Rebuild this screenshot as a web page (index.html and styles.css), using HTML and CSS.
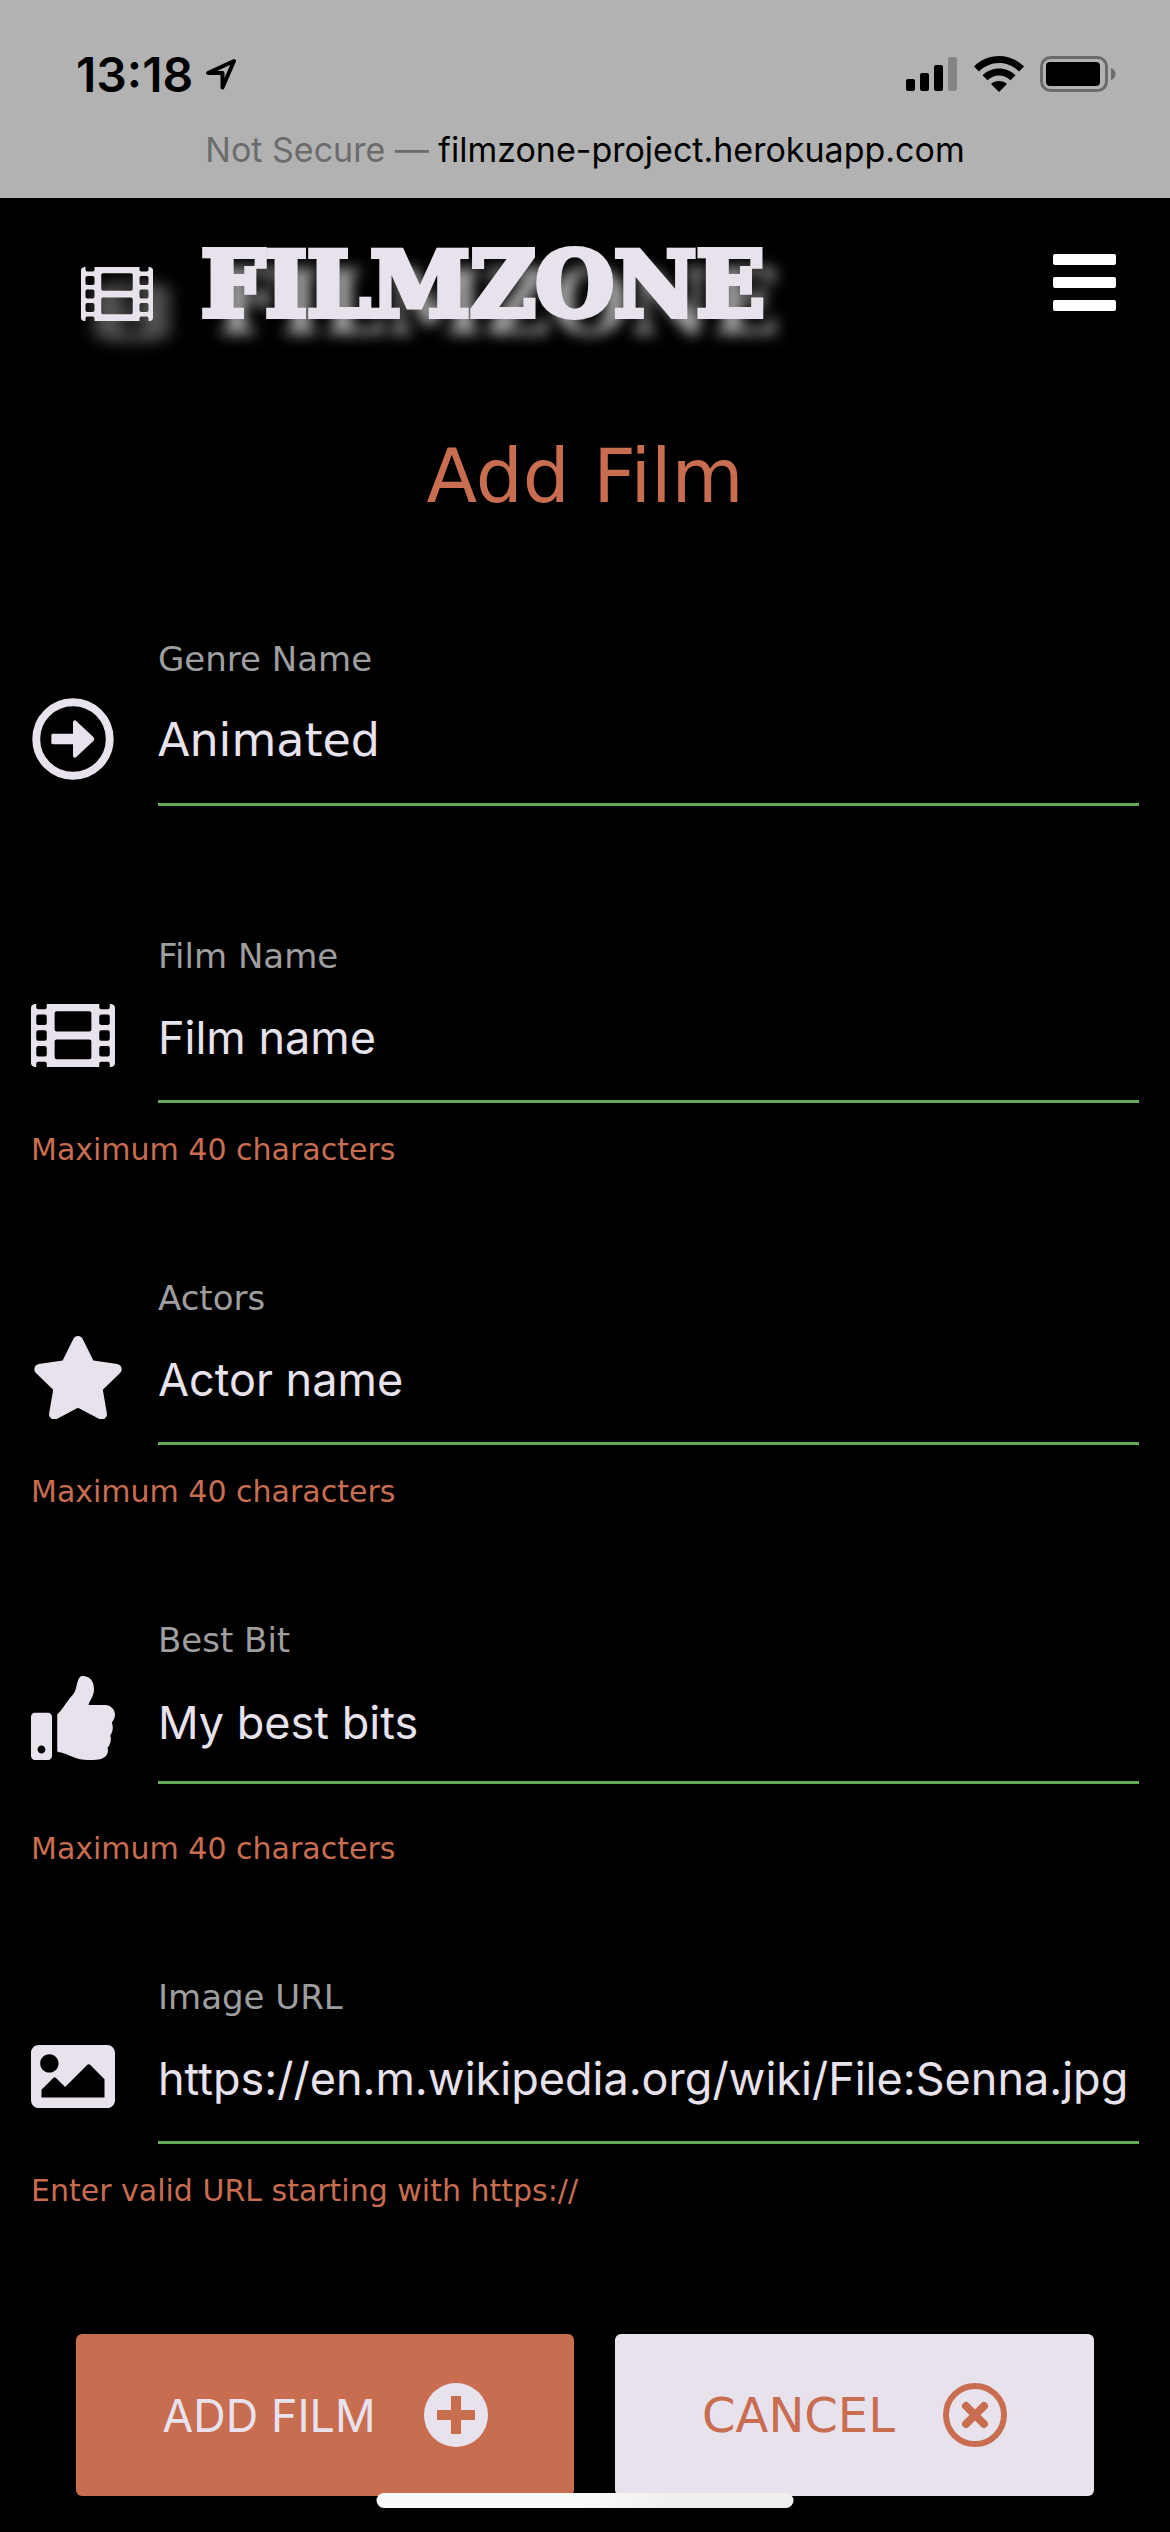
FILE: index.html
```html
<!DOCTYPE html>
<html lang="en">
<head>
<meta charset="utf-8">
<meta name="viewport" content="width=device-width, initial-scale=1">
<title>FilmZone - Add Film</title>
<link rel="stylesheet" href="styles.css">
</head>
<body>
<svg class="sprite" aria-hidden="true">
  <symbol id="film" viewBox="0 0 512 384"><path fill-rule="evenodd" d="M0 24Q0 4 24 0h8v20q0 12 12 12h40q12 0 12-12V0h320v20q0 12 12 12h40q12 0 12-12V0h8q24 4 24 24v336q0 20-24 24h-8v-20q0-12-12-12h-40q-12 0-12 12v20H96v-20q0-12-12-12H44q-12 0-12 12v20h-8q-24-4-24-24zM44 64q-12 0-12 12v40q0 12 12 12h40q12 0 12-12V76q0-12-12-12zm0 96q-12 0-12 12v40q0 12 12 12h40q12 0 12-12v-40q0-12-12-12zm0 96q-12 0-12 12v40q0 12 12 12h40q12 0 12-12v-40q0-12-12-12zM428 64q-12 0-12 12v40q0 12 12 12h40q12 0 12-12V76q0-12-12-12zm0 96q-12 0-12 12v40q0 12 12 12h40q12 0 12-12v-40q0-12-12-12zm0 96q-12 0-12 12v40q0 12 12 12h40q12 0 12-12v-40q0-12-12-12zM156 44q-12 0-12 12v100q0 12 12 12h200q12 0 12-12V56q0-12-12-12zm0 172q-12 0-12 12v96q0 12 12 12h200q12 0 12-12v-96q0-12-12-12z"/></symbol>
</svg>

<div class="status">
  <div class="status-row">
    <span class="clock">13:18
      <svg class="location" viewBox="0 0 32 32" aria-hidden="true"><path d="M29 3 3 15h14.500v14.500z" fill="none" stroke="currentColor" stroke-width="4" stroke-linejoin="round"/></svg>
    </span>
    <span class="indicators">
      <svg width="52" height="36" viewBox="0 0 52 36" aria-hidden="true"><rect y="23" width="9" height="12" rx="2"/><rect x="14" y="17" width="9" height="18" rx="2"/><rect x="28" y="9" width="9" height="26" rx="2"/><rect x="42" y="1" width="9" height="34" rx="2" opacity=".25"/></svg>
      <svg width="50" height="36" viewBox="0 0 50 36" aria-hidden="true"><path d="M25 0C15.500 0 6.500 3.800 0 10.500l5 5C10.500 10 17.500 7 25 7s14.500 3 20 8.500l5-5C43.500 3.800 34.500 0 25 0z"/><path d="M25 12.500c-6 0-12 2.400-16.500 6.700l5 5C16.800 21.200 20.800 19.500 25 19.500s8.200 1.700 11.500 4.700l5-5C37 14.900 31 12.500 25 12.500z"/><path d="M25 25c-3 0-6 1-8 3l8 8 8-8c-2-2-5-3-8-3z"/></svg>
      <svg width="76" height="36" viewBox="0 0 76 36" aria-hidden="true"><rect x="1.500" y="1.500" width="65" height="33" rx="9" fill="none" stroke="#000" stroke-width="3" opacity=".4"/><rect x="6" y="6" width="54" height="24" rx="4"/><path d="M71 12c6 2 6 10 0 12z" opacity=".4"/></svg>
    </span>
  </div>
  <p class="address"><span class="insecure">Not Secure —</span> filmzone-project.herokuapp.com</p>
</div>

<header class="nav">
  <a class="brand" href="#"><svg class="brand-icon" viewBox="0 0 512 384" aria-hidden="true"><use href="#film"/></svg><span class="brand-name">FILMZONE</span></a>
  <button class="menu" type="button" aria-label="Menu"><span></span><span></span><span></span></button>
</header>

<main>
  <h1>Add Film</h1>
  <form>
    <div class="field choice">
      <label for="genre">Genre Name</label>
      <svg class="icon" viewBox="0 0 512 512" aria-hidden="true"><circle cx="256" cy="256" r="224" fill="none" stroke="currentColor" stroke-width="48"/><path d="M134 224h122v-70c0-12 12-16 20-8l104 98c7 7 7 17 0 24L276 366c-8 8-20 4-20-8v-70H134c-7 0-10-4-10-10v-44c0-6 3-10 10-10z"/></svg>
      <select id="genre"><option>Animated</option></select>
    </div>

    <div class="field">
      <label for="name">Film Name</label>
      <svg class="icon" viewBox="0 0 512 384" aria-hidden="true"><use href="#film"/></svg>
      <input id="name" type="text" value="Film name" aria-describedby="name-help">
      <small id="name-help">Maximum 40 characters</small>
    </div>

    <div class="field">
      <label for="actors">Actors</label>
      <svg class="icon wide" viewBox="0 0 576 512" aria-hidden="true"><path d="M259.300 17.800 194 150.200 47.900 171.500c-26.200 3.800-36.700 36.100-17.700 54.600l105.700 103-25 145.500c-4.500 26.300 23.200 46 46.400 33.700L288 439.600l130.700 68.700c23.200 12.200 50.900-7.400 46.400-33.700l-25-145.500 105.700-103c19-18.500 8.500-50.800-17.700-54.600L382 150.200 316.700 17.800c-11.700-23.600-45.600-23.900-57.400 0z"/></svg>
      <input id="actors" type="text" value="Actor name" aria-describedby="actors-help">
      <small id="actors-help">Maximum 40 characters</small>
    </div>

    <div class="field multiline">
      <label for="best">Best Bit</label>
      <svg class="icon" viewBox="0 0 512 512" aria-hidden="true"><path d="M104 224H24c-13.300 0-24 10.700-24 24v240c0 13.300 10.700 24 24 24h80c13.300 0 24-10.700 24-24V248c0-13.300-10.700-24-24-24zM64 472c-13.300 0-24-10.700-24-24s10.700-24 24-24 24 10.700 24 24-10.700 24-24 24zM384 81.500c0 42.400-26 66.200-33.300 94.500h101.700c33.400 0 59.400 27.700 59.600 58.100.1 17.900-7.500 37.200-19.400 49.200l-.1.100c9.800 23.300 8.200 56-9.300 79.500 8.700 25.900-.1 57.700-16.400 74.800 4.300 17.600 2.200 32.600-6.100 44.600C440.200 511.600 389.600 512 346.800 512h-2.800c-48.300 0-87.800-17.600-119.600-31.700-16-7.100-36.800-15.900-52.700-16.200-6.500-.1-11.800-5.500-11.800-12V238.300c0-3.200 1.300-6.300 3.600-8.500 39.600-39.100 56.600-80.600 89.100-113.100 14.800-14.800 20.200-37.200 25.400-58.900C282.500 39.300 291.800 0 312 0c24 0 72 8 72 81.500z"/></svg>
      <textarea id="best" rows="1" aria-describedby="best-help">My best bits</textarea>
      <small id="best-help">Maximum 40 characters</small>
    </div>

    <div class="field">
      <label for="image">Image URL</label>
      <svg class="icon" viewBox="0 0 512 384" aria-hidden="true"><path d="M464 384H48c-26.500 0-48-21.500-48-48V48C0 21.500 21.500 0 48 0h416c26.500 0 48 21.500 48 48v288c0 26.500-21.500 48-48 48zM112 56c-30.900 0-56 25.100-56 56s25.100 56 56 56 56-25.100 56-56-25.100-56-56-56zM64 320h384V208l-87.500-87.500c-4.700-4.700-12.300-4.700-17 0L208 256l-55.500-55.500c-4.700-4.700-12.300-4.700-17 0L64 272z"/></svg>
      <input id="image" type="url" value="https://en.m.wikipedia.org/wiki/File:Senna.jpg" aria-describedby="image-help">
      <small id="image-help">Enter valid URL starting with https://</small>
    </div>

    <div class="actions">
      <button class="btn add" type="submit">ADD FILM
        <svg class="btn-icon" viewBox="0 0 64 64" aria-hidden="true"><circle cx="32" cy="32" r="32"/><path d="M32 18v28M18 32h28" stroke="#c86d50" stroke-width="10" stroke-linecap="square"/></svg>
      </button>
      <a class="btn cancel" href="#">CANCEL
        <svg class="btn-icon" viewBox="0 0 64 64" aria-hidden="true"><circle cx="32" cy="32" r="29" fill="none" stroke="currentColor" stroke-width="6"/><path d="m23 23 18 18M41 23 23 41" stroke="currentColor" stroke-width="8" stroke-linecap="round"/></svg>
      </a>
    </div>
  </form>
</main>
<div class="home-bar"></div>
</body>
</html>
```
FILE: styles.css
```css
* {
  box-sizing: border-box;
}

body {
  margin: 0;
  background: #000;
  color: #e8e2ed;
  font-family: "DejaVu Sans", sans-serif;
}

svg {
  display: block;
  fill: currentColor;
}

.sprite {
  display: none;
}

.status {
  height: 198px;
  padding: 50px 54px 0 76px;
  background: #b2b2b2;
  color: #000;
  font-family: Inter, sans-serif;
}

.status-row {
  display: flex;
  justify-content: space-between;
  align-items: center;
  height: 48px;
}

.clock {
  display: flex;
  align-items: center;
  gap: 12px;
  font-size: 48px;
  font-weight: 600;
}

.location {
  width: 32px;
  height: 32px;
}

.indicators {
  display: flex;
  gap: 16px;
}

.address {
  margin: 28px 0 0;
  padding-right: 22px;
  font-size: 34px;
  line-height: 48px;
  text-align: center;
}

.insecure {
  color: #6c6c6c;
}

.nav {
  display: flex;
  justify-content: space-between;
  align-items: center;
  height: 168px;
  padding: 0 54px 0 81px;
}

.brand {
  display: flex;
  align-items: center;
  gap: 48px;
  color: inherit;
  font-family: "DejaVu Serif", serif;
  font-size: 90px;
  font-weight: 700;
  line-height: 104px;
  text-decoration: none;
  text-shadow: 15px 18px 14px #aaa;
  -webkit-text-stroke: 6px #e8e2ed;
}

.brand-name {
  padding-top: 4px;
}

.brand-icon {
  width: 72px;
  height: 54px;
  margin-top: 24px;
  filter: drop-shadow(15px 18px 8px #888);
}

.menu {
  display: flex;
  flex-direction: column;
  gap: 12px;
  width: 63px;
  padding: 0;
  border: 0;
  background: none;
}

.menu span {
  height: 11px;
  border-radius: 2px;
  background: #fff;
}

main {
  padding: 0 31px 36px;
}

h1 {
  margin: 70px 0 123px;
  color: #c86d50;
  font-size: 74px;
  font-weight: 400;
  line-height: 80px;
  text-align: center;
}

.field {
  display: grid;
  grid-template-columns: 84px 1fr;
  column-gap: 43px;
  margin-bottom: 110px;
}

.choice {
  margin-bottom: 130px;
}

label {
  grid-column: 2;
  color: #9e9e9e;
  font-size: 34px;
  line-height: 40px;
}

.icon {
  grid-column: 1;
  width: 84px;
  margin-bottom: 8px;
  align-self: center;
}

.wide {
  width: 94px;
}

input,
select,
textarea {
  display: block;
  width: 100%;
  height: 127px;
  margin: 0;
  padding: 0 0 2px;
  border: 0;
  border-bottom: 3px solid #66a95a;
  border-radius: 0;
  outline: 0;
  appearance: none;
  background: none;
  color: inherit;
  font: 45px Inter, sans-serif;
}

select {
  font: 46px "DejaVu Sans", sans-serif;
}

textarea {
  height: 124px;
  padding: 35px 0 0;
  overflow: hidden;
  line-height: 56px;
  resize: none;
}

small {
  grid-column: 1 / -1;
  margin-top: 29px;
  color: #c86d50;
  font-size: 30px;
  line-height: 36px;
}

.multiline small {
  margin-top: 47px;
}

.actions {
  display: flex;
  gap: 41px;
  padding: 15px 45px 0;
}

.btn {
  display: flex;
  flex: 498 1 0;
  justify-content: center;
  align-items: center;
  gap: 48px;
  height: 162px;
  padding: 0;
  border: 0;
  border-radius: 6px;
  font-size: 45px;
  text-decoration: none;
}

.add {
  background: #c86d50;
  color: #e8e2ed;
  font-family: Inter, sans-serif;
}

.cancel {
  flex-grow: 479;
  background: #e8e2ed;
  color: #c86d50;
  font-size: 48px;
}

.btn-icon {
  width: 64px;
  height: 64px;
}

.home-bar {
  position: fixed;
  bottom: 24px;
  left: 50%;
  width: 417px;
  height: 15px;
  border-radius: 8px;
  background: linear-gradient(90deg, #fafafa 50%, #efefef 70%);
  transform: translateX(-50%);
}
```
